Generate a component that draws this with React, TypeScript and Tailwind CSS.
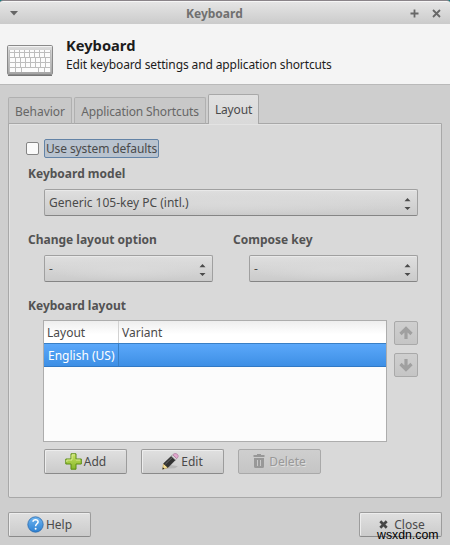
import type { ReactNode } from 'react';
import clsx from 'clsx';

const BUTTON =
  'flex items-center justify-center rounded-[2px] border border-[#9c9c9c] border-b-[#8a8a8a] bg-linear-to-b from-[#e0e0e0] to-[#cbcbcb] shadow-[inset_1px_1px_0_#ededed]';
const DISABLED =
  'flex items-center justify-center rounded-[2px] border border-[#a9a9a9] bg-linear-to-b from-[#cfcfcf] to-[#c5c5c5]';

// one entry per key row: top, height and the x positions of the separators
const KEY_ROWS = [
  { y: 50, h: 2, xs: [9, 14, 19, 24, 29, 34, 39, 44, 50] },
  { y: 53, h: 4, xs: [9, 14, 19, 24, 29, 34, 39, 44, 50] },
  { y: 58, h: 4, xs: [9, 15, 20, 25, 30, 35, 40, 45, 50] },
  { y: 63, h: 4, xs: [9, 15, 20, 25, 30, 35, 40, 45, 50] },
  { y: 68, h: 4, xs: [9, 15, 21, 38, 44, 50] },
];

function KeyboardIcon() {
  return (
    <svg width="46" height="31" viewBox="7 45 46 31" className="shrink-0">
      <defs>
        <linearGradient id="kb" x1="0" y1="0" x2="0" y2="1">
          <stop offset="0" stopColor="#dedede" />
          <stop offset="1" stopColor="#a4a4a4" />
        </linearGradient>
      </defs>
      <rect x="7.5" y="45.5" width="45" height="29" rx="1.2" fill="url(#kb)" stroke="#8a8a8a" />
      <path d="M8.5 46.5h43" stroke="#f3f3f3" />
      <rect x="9" y="50" width="42" height="22" fill="#bdbdbd" />
      {KEY_ROWS.map(({ y, h, xs }) =>
        xs.slice(0, -1).map((x, i) => (
          <rect key={`${y}-${x}`} x={x + 1} y={y} width={xs[i + 1] - x - 1} height={h} fill="#fcfcfc" />
        )),
      )}
      <path d="M8 75.5h44" stroke="#777" />
    </svg>
  );
}

function AddIcon() {
  return (
    <svg width="17" height="17" viewBox="0 0 17 17">
      <defs>
        <linearGradient id="add" x1="0" y1="0" x2="0" y2="1">
          <stop offset="0" stopColor="#c9e264" />
          <stop offset="1" stopColor="#86b82a" />
        </linearGradient>
      </defs>
      <path
        d="M6 .8h5V6h5.3v5H11v5.2H6V11H.8V6H6z"
        fill="url(#add)"
        stroke="#5c8c13"
        strokeLinejoin="round"
      />
      <path d="M7 6.8V1.8h3M1.8 9V7H7M11 7h4.2" fill="none" stroke="#e3f1a4" strokeWidth=".8" />
    </svg>
  );
}

function EditIcon() {
  return (
    <svg width="17" height="17" viewBox="0 0 17 17">
      <path d="M2.5 15.8 9 12l7 1.2-3 2z" fill="#b8b8b8" />
      <path d="M.6 16.2 1.5 10.8l4.6 3.8z" fill="#f4df92" stroke="#b8954a" strokeWidth=".5" />
      <path d="M.4 16.5l.4-2.2 1.7 1.4z" fill="#222" />
      <path d="M1.6 10.6 9.4 3.2l3.9 3.7-7.4 7.6z" fill="#333" stroke="#222" strokeWidth=".6" />
      <path d="M3.4 11.1l7.2-6.9" stroke="#6e6e6e" strokeWidth=".9" />
      <path d="M9.4 3.2l1.4-1.4 3.9 3.7-1.4 1.4z" fill="#d6d6d6" stroke="#777" strokeWidth=".4" />
      <path
        d="M10.9 1.8C12 .3 13.900 .1 15.300 1.300C16.700 2.600 16.500 4.300 14.700 5.500z"
        fill="#e2a8cd"
        stroke="#a66b96"
        strokeWidth=".6"
      />
    </svg>
  );
}

function TrashIcon() {
  return (
    <svg width="12" height="15" viewBox="0 0 12 15">
      <path
        fillRule="evenodd"
        d="M4 0h4v1h3.500v2H.5V1H4zM1 4h10v8.500q0 1.500-1.500 1.500h-7Q1 14 1 12.500zM4 6v6h1V6zM7 6v6h1V6z"
        fill="#989898"
      />
    </svg>
  );
}

function HelpIcon() {
  return (
    <svg width="17" height="17" viewBox="0 0 17 17">
      <defs>
        <linearGradient id="help" x1="0" y1="0" x2="0" y2="1">
          <stop offset="0" stopColor="#6fb5f0" />
          <stop offset="1" stopColor="#2c80d2" />
        </linearGradient>
      </defs>
      <circle cx="8.5" cy="8.5" r="7.7" fill="url(#help)" stroke="#2969ad" strokeWidth=".8" />
      <path
        d="M6 5.8C6.200 3 11.200 3 11.100 5.900C11 7.900 8.600 7.800 8.600 10.300"
        fill="none"
        stroke="#fff"
        strokeWidth="1.5"
      />
      <circle cx="8.6" cy="12.7" r="1" fill="#fff" />
    </svg>
  );
}

function CloseIcon() {
  return (
    <svg width="9" height="9" viewBox="0 0 9 9">
      <path d="M1.300 1.300l6.400 6.400M7.700 1.300L1.300 7.700" stroke="#464646" strokeWidth="2.7" />
    </svg>
  );
}

function ArrowIcon({ down }: { down?: boolean }) {
  return (
    <svg width="14" height="14" viewBox="0 0 14 14" className={clsx(down && 'rotate-180')}>
      <path d="M7 13V3M1.500 8L7 2.500 12.500 8" fill="none" stroke="#a0a0a0" strokeWidth="3.2" />
    </svg>
  );
}

function Combo({ value, className }: { value: string; className: string }) {
  return (
    <div
      className={clsx(
        'flex h-[27px] items-center justify-between rounded-[2px] border border-[#a0a0a0] border-b-[#858585] bg-[radial-gradient(ellipse_at_center,#dadada,transparent_70%),linear-gradient(#dfdfdf,#cbcbcb)] pr-[6px] pl-[4px] shadow-[inset_0_1px_0_#e9e9e9]',
        className,
      )}
    >
      <span>{value}</span>
      <svg width="7" height="12" viewBox="0 0 7 12" className="mt-[2px]">
        <path d="M.5 3.300L3.500 0l3 3.300zM.5 9h6l-3 3z" fill="#4b4b4b" />
      </svg>
    </div>
  );
}

function Heading({ children }: { children: ReactNode }) {
  return <h2 className="h-4 pt-px text-[12px] leading-4 font-bold text-[#535353]">{children}</h2>;
}

function TitleBar() {
  return (
    <div className="flex h-6 items-center rounded-t-[3px] border-t border-[#8a8489] bg-linear-to-b from-[#e6e6e6] to-[#cbcbcb] pr-[9px] pl-[10px] shadow-[inset_0_1px_0_#f6f6f6]">
      <svg width="8" height="5" viewBox="0 0 8 5" className="mt-[2px]">
        <path d="M0 0h8L4 4.500z" fill="#666" />
      </svg>
      <span className="mt-[2px] ml-[168px] text-[12px] leading-4 font-bold text-[#707070]">Keyboard</span>
      <div className="mt-[1px] ml-auto flex gap-[13px]">
        <svg width="9" height="9" viewBox="0 0 9 9">
          <path d="M4.500 .5v8M.5 4.500h8" stroke="#686868" strokeWidth="1.8" />
        </svg>
        <svg width="9" height="9" viewBox="0 0 9 9">
          <path d="M1 1l7 7M8 1L1 8" stroke="#686868" strokeWidth="1.8" />
        </svg>
      </div>
    </div>
  );
}

export default function App() {
  return (
    <div className="h-[545px] w-[450px] overflow-hidden bg-[#087f82] font-['Noto_Sans',sans-serif] text-[12px] leading-4 text-[#4a4a4a]">
      <TitleBar />
      <header className="flex h-15 bg-[#f4f4f4] pt-[21px] pl-[7px]">
        <KeyboardIcon />
        <div className="-mt-[10px] ml-[13px] text-[#1c1c1c]">
          <h1 className="text-[14.7px] leading-5 font-bold">Keyboard</h1>
          <p className="mt-px leading-[17px] tracking-[-0.115px]">Edit keyboard settings and application shortcuts</p>
        </div>
      </header>

      <main className="h-[461px] border-t border-[#b9b9b9] bg-[#cecece] px-2 pt-[9px]">
        <div className="relative z-10 -mb-px flex h-[30px] items-end gap-[2px] text-[#666]">
          <div className="flex h-[27px] w-[64px] items-center justify-center rounded-t-[2px] border border-[#b0b0b0] border-b-[#a8a8a8] bg-[#c8c8c8] pt-[2px]">
            Behavior
          </div>
          <div className="flex h-[27px] w-[132px] items-center justify-center rounded-t-[2px] border border-[#b0b0b0] border-b-[#a8a8a8] bg-[#c8c8c8] pt-[2px] tracking-[-0.12px]">
            Application Shortcuts
          </div>
          <div className="flex h-[30px] w-[51px] items-center justify-center rounded-t-[2px] border border-b-0 border-[#a8a8a8] bg-linear-to-b from-[#e1e1e1] to-[#d9d9d9] tracking-[-0.15px] text-[#4a4a4a]">
            Layout
          </div>
        </div>

        <section className="h-[375px] w-[434px] rounded-b-[2px] border border-[#a8a8a8] bg-[#d9d9d9] pt-[14px] pl-[17px] shadow-[inset_1px_1px_0_#e3e3e3]">
          <div className="flex h-5 items-center gap-[5px]">
            <span className="size-[13px] rounded-[2px] border border-[#858585] bg-[#fafafa]" />
            <span className="flex h-[19px] w-[115px] items-center justify-center rounded-[2px] border border-[#6383a6] bg-[#b9c3cf] pt-[2px] tracking-[-0.1px] whitespace-nowrap">
              Use system defaults
            </span>
          </div>

          <div className="mt-[7px] ml-[2px]">
            <Heading>Keyboard model</Heading>
          </div>
          <Combo value="Generic 105-key PC (intl.)" className="mt-[8px] ml-[18px] w-[374px]" />

          <div className="mt-[15px] ml-[2px] flex gap-[36px]">
            <div className="w-[169px]">
              <Heading>Change layout option</Heading>
              <Combo value="-" className="mt-[8px] ml-[16px] w-[169px]" />
            </div>
            <div>
              <Heading>Compose key</Heading>
              <Combo value="-" className="mt-[8px] ml-[16px] w-[169px]" />
            </div>
          </div>

          <div className="mt-[15px] ml-[2px]">
            <Heading>Keyboard layout</Heading>
          </div>
          <div className="mt-[7px] ml-[17px] flex gap-[7px]">
            <div className="h-[122px] w-[344px] border border-[#adadad] bg-[#fcfcfc]">
              <div className="flex h-[22px] items-center bg-linear-to-b from-[#eeeeee] to-white to-60%">
                <span className="flex h-full w-[75px] items-center border-r border-[#d2d2d2] pt-[2px] pl-[3px]">
                  Layout
                </span>
                <span className="pt-[2px] pl-[3px]">Variant</span>
              </div>
              <div className="flex h-6 items-center border-y border-t-[#397fc5] border-b-[#3179c5] bg-linear-to-b from-[#5ba8fa] to-[#3d8fe5] text-white">
                <span className="flex h-full w-[75px] items-center border-r border-[#397fc5] pt-[2px] pl-1 whitespace-nowrap">
                  English (US)
                </span>
              </div>
            </div>
            <div className="mt-px flex flex-col gap-2">
              <div className={clsx(DISABLED, 'size-6')}>
                <ArrowIcon />
              </div>
              <div className={clsx(DISABLED, 'size-6')}>
                <ArrowIcon down />
              </div>
            </div>
          </div>

          <div className="mt-[7px] ml-[18px] flex gap-[14px]">
            <div className={clsx(BUTTON, 'h-[25px] w-[83px] gap-[2px]')}>
              <AddIcon />
              <span>Add</span>
            </div>
            <div className={clsx(BUTTON, 'h-[25px] w-[83px] gap-[2px]')}>
              <EditIcon />
              <span>Edit</span>
            </div>
            <div className={clsx(DISABLED, 'h-[25px] w-[83px] gap-[4px] text-[#999] [text-shadow:1px_1px_0_#dedede]')}>
              <TrashIcon />
              <span>Delete</span>
            </div>
          </div>
        </section>

        <footer className="mt-[14px] flex justify-between">
          <div className={clsx(BUTTON, 'h-[25px] w-[83px] gap-[2px]')}>
            <HelpIcon />
            <span>Help</span>
          </div>
          <div className={clsx(BUTTON, 'relative h-[25px] w-[83px] gap-[6px] pl-[3px]')}>
            <CloseIcon />
            <span>Close</span>
            <span className="absolute top-[14px] left-[17px] font-['Liberation_Sans',sans-serif] text-[12.3px] leading-4 text-black">
              wsxdn.com
            </span>
          </div>
        </footer>
      </main>
    </div>
  );
}
